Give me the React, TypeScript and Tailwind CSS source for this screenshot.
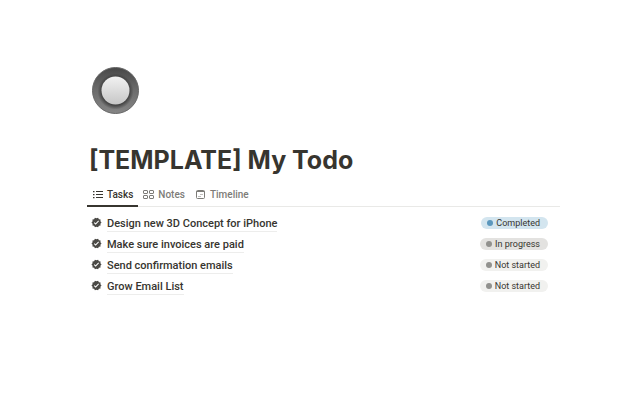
import { useState } from "react"
import type React from "react"
import clsx from "clsx"

type Status = "Completed" | "In progress" | "Not started"

const tasks: { title: string; status: Status }[] = [
  { title: "Design new 3D Concept for iPhone", status: "Completed" },
  { title: "Make sure invoices are paid", status: "In progress" },
  { title: "Send confirmation emails", status: "Not started" },
  { title: "Grow Email List", status: "Not started" },
]

const tabs = [
  { name: "Tasks", icon: <ListIcon /> },
  { name: "Notes", icon: <GalleryIcon /> },
  { name: "Timeline", icon: <TimelineIcon /> },
]

export default function App() {
  const [active, setActive] = useState("Tasks")

  return (
    <main className="min-h-screen bg-white pl-[87px] pr-20 pt-[66px] font-['Roboto','Liberation_Sans',sans-serif] text-[#37352f]">
      <header className="pl-0.5">
        <PageIcon />
        <h1 className="mt-[29px] font-['Inter','Liberation_Sans',sans-serif] text-[25px] font-bold leading-8">
          [TEMPLATE] My Todo
        </h1>
      </header>

      {/* View tabs */}
      <div role="tablist" className="mt-2 flex border-b border-[#e9e9e7]">
        {tabs.map((tab) => (
          <Tab
            key={tab.name}
            icon={tab.icon}
            label={tab.name}
            active={tab.name === active}
            onClick={() => setActive(tab.name)}
          />
        ))}
      </div>

      <ul className="pl-1 pr-3 pt-[5px]">
        {tasks.map((task) => (
          <li key={task.title} className="flex h-[21px] items-center justify-between">
            <a href="#" className="flex items-center gap-[5px]">
              <CheckBadge />
              <span className="border-b border-[#ededec] pt-0.5 text-[11px] font-medium leading-[15px]">
                {task.title}
              </span>
            </a>
            <StatusPill status={task.status} />
          </li>
        ))}
      </ul>
    </main>
  )
}

function Tab({
  icon,
  label,
  active,
  onClick,
}: {
  icon: React.ReactNode
  label: string
  active: boolean
  onClick: () => void
}) {
  return (
    <button
      type="button"
      role="tab"
      aria-selected={active}
      onClick={onClick}
      className={clsx(
        "-mb-px flex h-[23px] items-center gap-[3px] border-b-2 px-[5px] text-[10px] font-medium leading-4",
        active ? "border-[#37352f] text-[#37352f]" : "border-transparent text-[#7d7c78]",
      )}
    >
      {icon}
      {label}
    </button>
  )
}

function StatusPill({ status }: { status: Status }) {
  return (
    <span
      className={clsx(
        "flex h-3 items-center gap-[3px] rounded-full pl-[6px] pr-2 text-[9px] leading-3",
        status === "Completed" && "bg-[#d3e5ef]",
        status === "In progress" && "bg-[#e3e2e0]",
        status === "Not started" && "bg-[#f1f1ef]",
      )}
    >
      <span
        className={clsx("size-[6px] rounded-full", status === "Completed" ? "bg-[#5b97bd]" : "bg-[#91918e]")}
      ></span>
      {status}
    </span>
  )
}

// Round metal button used as the page icon
function PageIcon() {
  return (
    <svg width="53" height="49" viewBox="0 0 53 49" aria-hidden="true">
      <defs>
        <linearGradient id="ring" x1="0" y1="0" x2="0" y2="1">
          <stop offset="0" stopColor="#474747" />
          <stop offset="0.5" stopColor="#6c6c6c" />
          <stop offset="1" stopColor="#858585" />
        </linearGradient>
        <linearGradient id="knob" x1="0" y1="0" x2="0" y2="1">
          <stop offset="0" stopColor="#f2f2f2" />
          <stop offset="1" stopColor="#c6c6c6" />
        </linearGradient>
        <radialGradient id="shade">
          <stop offset="0.75" stopColor="#333" stopOpacity="0.8" />
          <stop offset="1" stopColor="#333" stopOpacity="0" />
        </radialGradient>
      </defs>
      <circle cx="26.5" cy="24.5" r="23" fill="url(#ring)" stroke="#666" strokeWidth="1" />
      <circle cx="26.5" cy="25.5" r="18" fill="url(#shade)" />
      <circle cx="26.5" cy="24.5" r="14" fill="url(#knob)" />
    </svg>
  )
}

function ListIcon() {
  return (
    <svg width="12" height="12" viewBox="0 0 12 12" fill="currentColor" aria-hidden="true">
      <path d="M1 2h1.5v1.2H1zM1 5h1.5v1.2H1zM1 8h1.5v1.2H1zM4 2h7v1H4zM4 5h7v1H4zM4 8h7v1H4z" />
    </svg>
  )
}

function GalleryIcon() {
  return (
    <svg width="12" height="12" viewBox="0 0 12 12" fill="none" stroke="currentColor" aria-hidden="true">
      <rect x="0.5" y="1.5" width="4" height="3" rx="0.5" />
      <rect x="6.5" y="1.5" width="4" height="3" rx="0.5" />
      <rect x="0.5" y="6.5" width="4" height="3" rx="0.5" />
      <rect x="6.5" y="6.5" width="4" height="3" rx="0.5" />
    </svg>
  )
}

function TimelineIcon() {
  return (
    <svg width="12" height="12" viewBox="0 0 12 12" fill="none" stroke="currentColor" aria-hidden="true">
      <rect x="1.5" y="1.5" width="8" height="8" rx="1" />
      <path d="M1.5 2.5h8" />
      <path d="M5 5.5h3M3 7.5h3" strokeOpacity="0.5" />
    </svg>
  )
}

function CheckBadge() {
  return (
    <svg width="11" height="11" viewBox="0 0 24 24" fill="#4b4a46" aria-hidden="true">
      <path d="M23 12l-2.44-2.79.34-3.69-3.61-.82-1.89-3.2L12 2.96 8.6 1.5 6.71 4.69 3.1 5.5l.34 3.7L1 12l2.44 2.79-.34 3.7 3.61.82L8.6 22.5l3.4-1.47 3.4 1.46 1.89-3.19 3.61-.82-.34-3.69L23 12zm-12.91 4.72-3.8-3.81 1.48-1.48 2.32 2.33 5.85-5.87 1.48 1.48-7.33 7.35z" />
    </svg>
  )
}
